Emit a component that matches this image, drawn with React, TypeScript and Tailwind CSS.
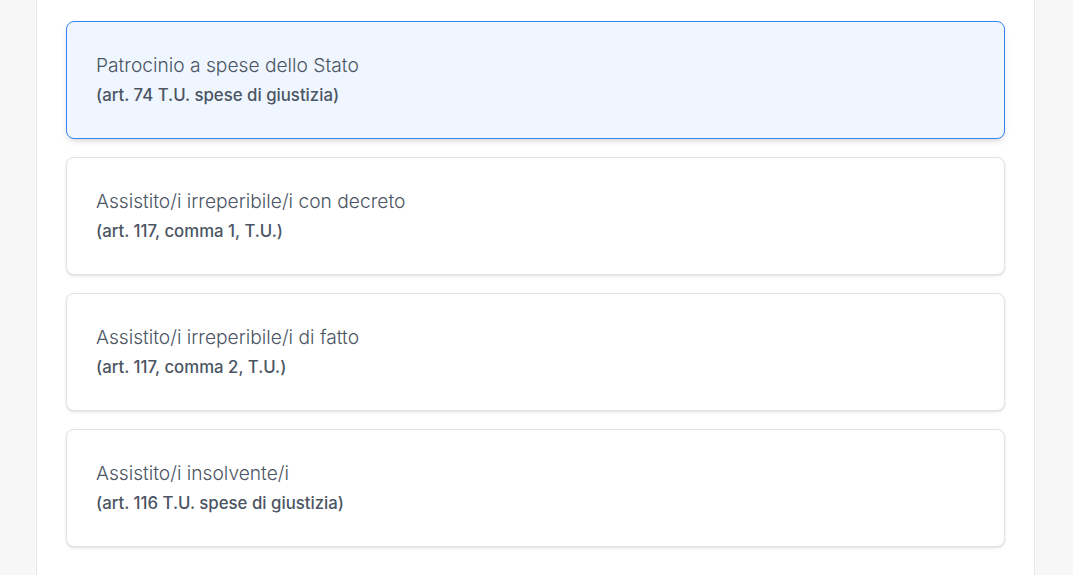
import React, { useState } from 'react'

const options = [
  { id: 'stato', title: 'Patrocinio a spese dello Stato', ref: '(art. 74 T.U. spese di giustizia)' },
  { id: 'decreto', title: 'Assistito/i irreperibile/i con decreto', ref: '(art. 117, comma 1, T.U.)' },
  { id: 'fatto', title: 'Assistito/i irreperibile/i di fatto', ref: '(art. 117, comma 2, T.U.)' },
  { id: 'insolvente', title: 'Assistito/i insolvente/i', ref: '(art. 116 T.U. spese di giustizia)' },
]

export default function App() {
  const [selected, setSelected] = useState('stato')

  return (
    <div className="min-h-[575px] bg-[#f7f7f8] font-['Inter',sans-serif]">
      <div className="ml-[36px] w-[999px] min-h-[575px] bg-white border-x border-[#e3e8ef] px-[29px] pt-[21px] pb-6">
        <div className="flex flex-col gap-[18px]">
          {options.map(opt => {
            const active = opt.id === selected
            return (
              <button
                key={opt.id}
                onClick={() => setSelected(opt.id)}
                className={`text-left rounded-lg border px-[29px] pt-[30px] pb-[31px] ${
                  active
                    ? 'bg-[#eff6ff] border-[#3b82f6] shadow-md'
                    : 'bg-white border-[#dfe3ea] shadow-sm'
                }`}
              >
                <div className="text-[19.2px] leading-[27px] font-light text-[#4b5563]">{opt.title}</div>
                <div className="mt-1 text-[16.8px] leading-6 font-medium text-[#4b5563]">{opt.ref}</div>
              </button>
            )
          })}
        </div>
      </div>
    </div>
  )
}
